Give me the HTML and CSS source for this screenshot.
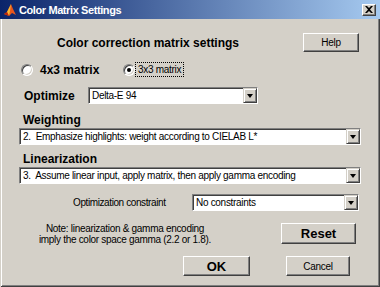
FILE: index.html
```html
<!DOCTYPE html>
<html lang="en">

<head>
    <meta charset="UTF-8">
    <title>Color Matrix Settings</title>
    <link rel="stylesheet" href="styles.css">
</head>

<body>
    <div class="window">
        <div class="titlebar">
            <svg class="app-icon" width="14" height="14" viewBox="0 0 14 14">
                <path d="M1 11 L4 9 L6 5 L8 1 L10 6 L13 12 L9 10 L6 13 Z" fill="#e8561c" />
                <path d="M4 9 L6 5 L8 1 L7 8 L6 13 Z" fill="#f7b733" />
                <path d="M1 11 L4 9 L6 13 Z" fill="#b8260c" />
            </svg>
            <span class="title-text">Color Matrix Settings</span>
            <div class="close-btn">
                <svg width="8" height="7" viewBox="0 0 8 7">
                    <path d="M0 0 L2 0 L4 2 L6 0 L8 0 L5 3.5 L8 7 L6 7 L4 5 L2 7 L0 7 L3 3.5 Z" fill="#000" />
                </svg>
            </div>
        </div>

        <div class="content">
            <div class="row head-row">
                <span class="heading">Color correction matrix settings</span>
                <div class="btn help-btn">Help</div>
            </div>

            <div class="row radio-row">
                <div class="radio-option first">
                    <span class="radio"></span>
                    <span class="radio-label bold">4x3 matrix</span>
                </div>
                <div class="radio-option">
                    <span class="radio checked"></span>
                    <span class="radio-label focus">3x3 matrix</span>
                </div>
            </div>

            <div class="row optimize-row">
                <span class="field-label">Optimize</span>
                <div class="select optimize-select">
                    <span class="select-text">Delta-E 94</span>
                    <span class="arrow"></span>
                </div>
            </div>

            <div class="block-label weighting-label">Weighting</div>
            <div class="select wide">
                <span class="select-text">2.  Emphasize highlights: weight according to CIELAB L*</span>
                <span class="arrow"></span>
            </div>

            <div class="block-label linear-label">Linearization</div>
            <div class="select wide">
                <span class="select-text">3.  Assume linear input, apply matrix, then apply gamma encoding</span>
                <span class="arrow"></span>
            </div>

            <div class="row constraint-row">
                <span class="constraint-label">Optimization constraint</span>
                <div class="select constraint-select">
                    <span class="select-text">No constraints</span>
                    <span class="arrow"></span>
                </div>
            </div>

            <div class="row note-row">
                <div class="note">Note: linearization &amp; gamma encoding<br>imply the color space gamma (2.2 or 1.8).</div>
                <div class="btn reset-btn">Reset</div>
            </div>

            <div class="row action-row">
                <div class="btn ok-btn">OK</div>
                <div class="btn cancel-btn">Cancel</div>
            </div>
        </div>
    </div>
</body>

</html>
```

FILE: styles.css
```css
body {
    margin: 0;
    font-family: "Liberation Sans", Arial, sans-serif;
    font-size: 10px;
    color: #000;
}

.window {
    width: 380px;
    height: 287px;
    box-sizing: border-box;
    background-color: #d4d0c8;
    box-shadow: inset 1px 1px #d4d0c8, inset -1px -1px #404040, inset 2px 2px #fff, inset -2px -2px #808080;
    overflow: hidden;
}

/* Title bar */
.titlebar {
    height: 19px;
    display: flex;
    align-items: center;
    padding-left: 3px;
    background: linear-gradient(to right, #0a246a, #a6caf0);
}

.app-icon {
    margin-right: 2px;
}

.title-text {
    color: #fff;
    font-weight: bold;
    font-size: 11px;
    letter-spacing: -0.4px;
}

.close-btn {
    margin-left: auto;
    margin-right: 4px;
    width: 14px;
    height: 12px;
    box-sizing: border-box;
    background-color: #d4d0c8;
    border: 1px solid;
    border-color: #fff #404040 #404040 #fff;
    box-shadow: inset -1px -1px #808080;
    display: flex;
    align-items: center;
    justify-content: center;
}

/* Content rows */
.content {
    padding: 0 21px 0 20px;
}

.row {
    display: flex;
    align-items: center;
}

.bold,
.heading,
.field-label,
.block-label {
    font-size: 12px;
    font-weight: bold;
}

.head-row {
    margin-top: 14px;
    height: 19px;
}

.heading {
    margin-left: 37px;
}

.btn {
    box-sizing: border-box;
    background-color: #d4d0c8;
    border: 1px solid;
    border-color: #fff #404040 #404040 #fff;
    box-shadow: inset -1px -1px #808080;
    display: flex;
    align-items: center;
    justify-content: center;
    letter-spacing: -0.3px;
}

.help-btn {
    margin-left: auto;
    width: 56px;
    height: 19px;
}

.radio-row {
    margin-top: 10px;
    height: 15px;
}

.radio-option {
    display: flex;
    align-items: center;
}

.radio-option.first {
    width: 102px;
    margin-left: 1px;
}

.radio {
    width: 12px;
    height: 12px;
    box-sizing: border-box;
    border-radius: 50%;
    background-color: #fff;
    border: 1px solid;
    border-color: #808080 #fff #fff #808080;
    box-shadow: inset 1px 1px #404040, inset -1px -1px #d4d0c8;
    display: flex;
    align-items: center;
    justify-content: center;
}

.radio.checked::after {
    content: "";
    width: 4px;
    height: 4px;
    border-radius: 50%;
    background-color: #000;
}

.radio-label {
    margin-left: 7px;
}

.radio-label.focus {
    margin-left: 1px;
    padding: 1px 2px;
    outline: 1px dotted #000;
    letter-spacing: -0.3px;
}

.optimize-row {
    margin-top: 10px;
    height: 17px;
}

.field-label {
    width: 68px;
    padding-left: 4px;
    box-sizing: border-box;
}

.select {
    height: 17px;
    box-sizing: border-box;
    background-color: #fff;
    border: 1px solid;
    border-color: #808080 #fff #fff #808080;
    box-shadow: inset 1px 1px #404040;
    display: flex;
    align-items: center;
}

.select-text {
    padding-left: 3px;
    white-space: pre;
    letter-spacing: -0.3px;
}

.arrow {
    margin-left: auto;
    width: 14px;
    height: 15px;
    box-sizing: border-box;
    background-color: #d4d0c8;
    border: 1px solid;
    border-color: #d4d0c8 #404040 #404040 #d4d0c8;
    box-shadow: inset 1px 1px #fff, inset -1px -1px #808080;
    display: flex;
    align-items: center;
    justify-content: center;
}

.arrow::after {
    content: "";
    border-left: 3.5px solid transparent;
    border-right: 3.5px solid transparent;
    border-top: 4px solid #000;
}

.optimize-select {
    width: 170px;
}

.block-label {
    line-height: 15px;
    padding-left: 3px;
}

.weighting-label {
    margin-top: 9px;
}

.linear-label {
    margin-top: 7px;
}

.select.wide {
    margin-left: -1px;
    width: 342px;
}

.constraint-row {
    margin-top: 10px;
    height: 17px;
}

.constraint-label {
    margin-left: 53px;
    letter-spacing: -0.4px;
}

.constraint-select {
    margin-left: auto;
    width: 167px;
}

.note-row {
    margin-top: 12px;
    height: 21px;
}

.note {
    width: 210px;
    text-align: center;
    line-height: 11px;
    letter-spacing: -0.3px;
}

.reset-btn {
    margin-left: auto;
    margin-right: 3px;
    width: 75px;
    height: 21px;
    font-size: 13px;
    font-weight: bold;
    letter-spacing: 0;
}

.action-row {
    margin-top: 12px;
    height: 20px;
}

.ok-btn {
    margin-left: 163px;
    width: 67px;
    height: 20px;
    font-size: 13px;
    font-weight: bold;
    letter-spacing: 0;
}

.cancel-btn {
    margin-left: 36px;
    width: 64px;
    height: 20px;
}
```
